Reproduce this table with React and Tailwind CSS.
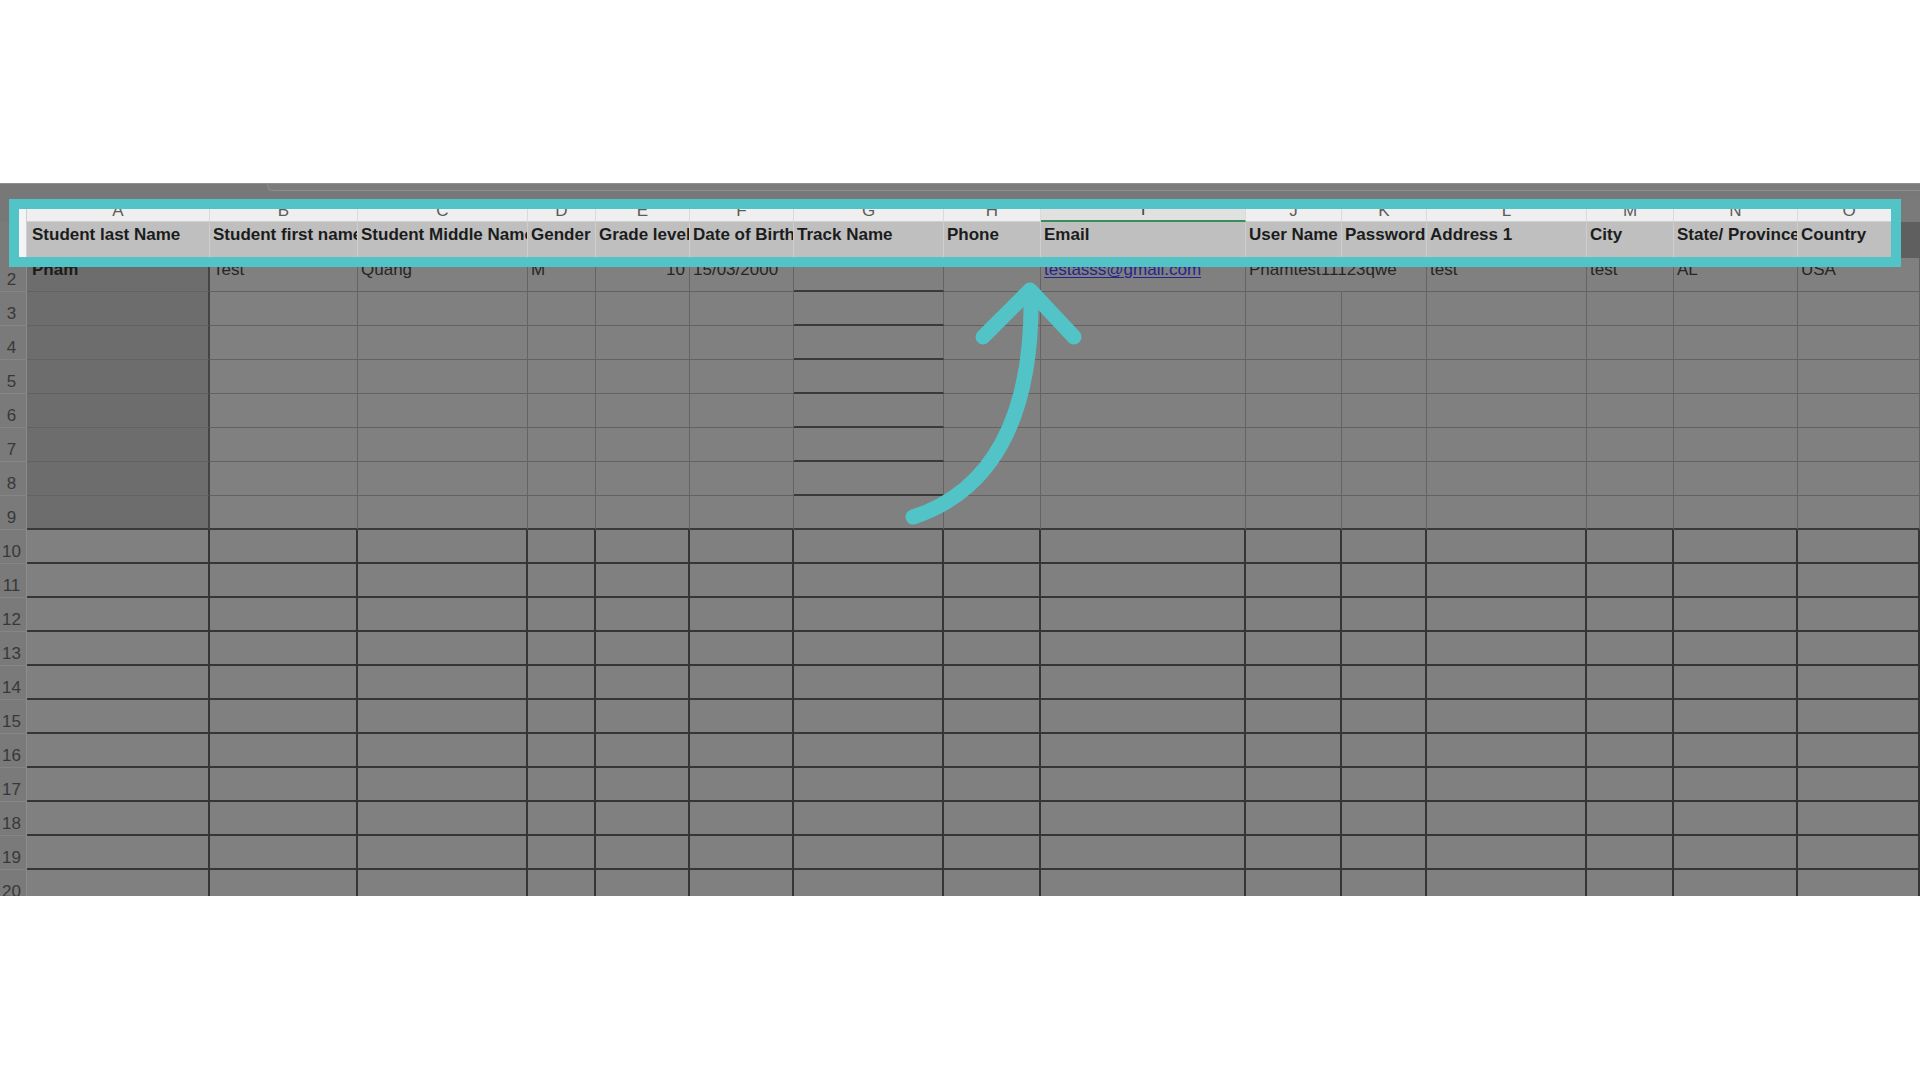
import React from 'react';

const COLS = [
  { key: 'A', w: 'w-[183px]', head: 'Student last Name' },
  { key: 'B', w: 'w-[148px]', head: 'Student first name' },
  { key: 'C', w: 'w-[170px]', head: 'Student Middle Name' },
  { key: 'D', w: 'w-[68px]', head: 'Gender' },
  { key: 'E', w: 'w-[94px]', head: 'Grade level' },
  { key: 'F', w: 'w-[104px]', head: 'Date of Birth' },
  { key: 'G', w: 'w-[150px]', head: 'Track Name' },
  { key: 'H', w: 'w-[97px]', head: 'Phone' },
  { key: 'I', w: 'w-[205px]', head: 'Email' },
  { key: 'J', w: 'w-[96px]', head: 'User Name' },
  { key: 'K', w: 'w-[85px]', head: 'Password' },
  { key: 'L', w: 'w-[160px]', head: 'Address 1' },
  { key: 'M', w: 'w-[87px]', head: 'City' },
  { key: 'N', w: 'w-[124px]', head: 'State/ Province' },
  { key: 'O', w: 'w-[103px]', head: 'Country' },
];

const ROW2 = {
  A: 'Pham', B: 'Test', C: 'Quang', D: 'M', E: '10', F: '15/03/2000',
  I: 'testasss@gmail.com', J: 'Phamtest11123qwe', L: 'test', M: 'test', N: 'AL', O: 'USA',
};

const ROWS = Array.from({ length: 19 }, (_, i) => i + 2);

// borders of the dimmed grid: light lines up to row 9, heavy ruled lines after
function cellBorders(row, key) {
  if (row >= 10) return 'border-r-2 border-b-2 border-[#353535]';
  const bottom = row === 9 || key === 'G'
    ? 'border-b-2 border-b-[#3a3a3a]'
    : 'border-b border-b-[#626262]';
  const right = key === 'A'
    ? 'border-r-2 border-r-[#444444]'
    : row === 2 && key === 'J'
      ? 'border-r border-r-transparent'
      : 'border-r border-r-[#646464]';
  const bg = key === 'A' ? 'bg-[#6d6d6d]' : '';
  return `${bottom} ${right} ${bg}`;
}

function cellText(row, key) {
  if (row !== 2 || !ROW2[key]) return null;
  const v = ROW2[key];
  if (key === 'A') return <span className="font-bold text-[#1c1c1c]">{v}</span>;
  if (key === 'I') return <span className="text-[#25258e] underline underline-offset-[2px]">{v}</span>;
  return <span className="text-[#262626]">{v}</span>;
}

function GridRow({ row }) {
  return (
    <div className="flex h-[34px] shrink-0 bg-[#808080]">
      <div className="w-[27px] shrink-0 h-full bg-[#7a7a7a] border-r border-r-[#8c8c8c] border-b border-b-[#858585] flex items-end justify-center pr-[3px] pb-[1px] text-[#383838] leading-[20px]">
        {row}
      </div>
      {COLS.map((c) => (
        <div
          key={c.key}
          className={`${c.key === 'O' ? 'flex-1' : `${c.w} shrink-0`} h-full whitespace-nowrap pt-[2px] ${c.key === 'A' ? 'pl-[5px]' : 'pl-[3px]'} ${c.key === 'E' ? 'text-right pr-[4px]' : ''} ${c.key === 'J' ? 'overflow-visible' : 'overflow-hidden'} ${cellBorders(row, c.key)}`}
        >
          {cellText(row, c.key)}
        </div>
      ))}
    </div>
  );
}

export default function App() {
  return (
    <div className="relative w-[1920px] h-[1080px] bg-white overflow-hidden font-['Liberation_Sans',Arial,sans-serif] text-[17px] leading-[20px]">
      <div className="pt-[183px]">
        <div className="relative h-[713px] overflow-hidden flex flex-col bg-[#808080]">
          {/* ribbon edge above the sheet */}
          <div className="h-[16px] shrink-0 bg-[#787878] border-t border-t-[#8e8e8e]">
            <div className="ml-[267px] h-[7px] bg-[#7c7c7c] border-l border-b border-[#8d8d8d] rounded-bl-[6px]" />
          </div>

          {/* column letters */}
          <div className="flex h-[23px] shrink-0">
            <div className="w-[19px] shrink-0 bg-[#777777]" />
            <div className="w-[8px] shrink-0 bg-[#f4f4f4] border-r border-r-[#cfcfcf]" />
            {COLS.map((c) => (
              <div
                key={c.key}
                className={`${c.w} shrink-0 flex items-end justify-center ${c.key === 'I' ? 'bg-[#e1e1e1] border-b-2 border-b-[#3a8d5c] text-[#3f3f3f]' : 'bg-[#efefef] border-b border-b-[#d0d0d0] text-[#5c5c5c]'} border-r border-r-[#dadada]`}
              >
                {c.key}
              </div>
            ))}
            <div className="flex-1 bg-[#7a7a7a]" />
          </div>

          {/* header row 1 */}
          <div className="flex h-[36px] shrink-0">
            <div className="w-[19px] shrink-0 bg-[#7a7a7a] flex items-end justify-end pr-[1px] text-[#383838]">1</div>
            <div className="w-[8px] shrink-0 bg-[#f4f4f4] border-r border-r-[#cfcfcf]" />
            {COLS.map((c) => (
              <div
                key={c.key}
                className={`${c.w} shrink-0 bg-[#bebfbe] border-r border-r-[#cdcecd] overflow-hidden whitespace-nowrap pt-[3px] ${c.key === 'A' ? 'pl-[5px]' : 'pl-[3px]'} font-bold text-[#1c1c1c]`}
              >
                {c.head}
              </div>
            ))}
            <div className="flex-1 bg-[#5f5f5f]" />
          </div>

          {ROWS.map((r) => (
            <GridRow key={r} row={r} />
          ))}

          {/* highlight frame */}
          <div className="absolute left-[9px] top-[16px] w-[1892px] h-[68px] border-[10px] border-[#52c3c6]" />
        </div>
      </div>

      <svg className="absolute left-0 top-0 pointer-events-none" width="1920" height="1080" viewBox="0 0 1920 1080">
        <path d="M913 517 C990 492 1033 420 1031 295" fill="none" stroke="#52c3c6" strokeWidth="15" strokeLinecap="round" />
        <path d="M983 337 L1030 290 L1074 337" fill="none" stroke="#52c3c6" strokeWidth="15" strokeLinecap="round" strokeLinejoin="round" />
      </svg>
    </div>
  );
}
